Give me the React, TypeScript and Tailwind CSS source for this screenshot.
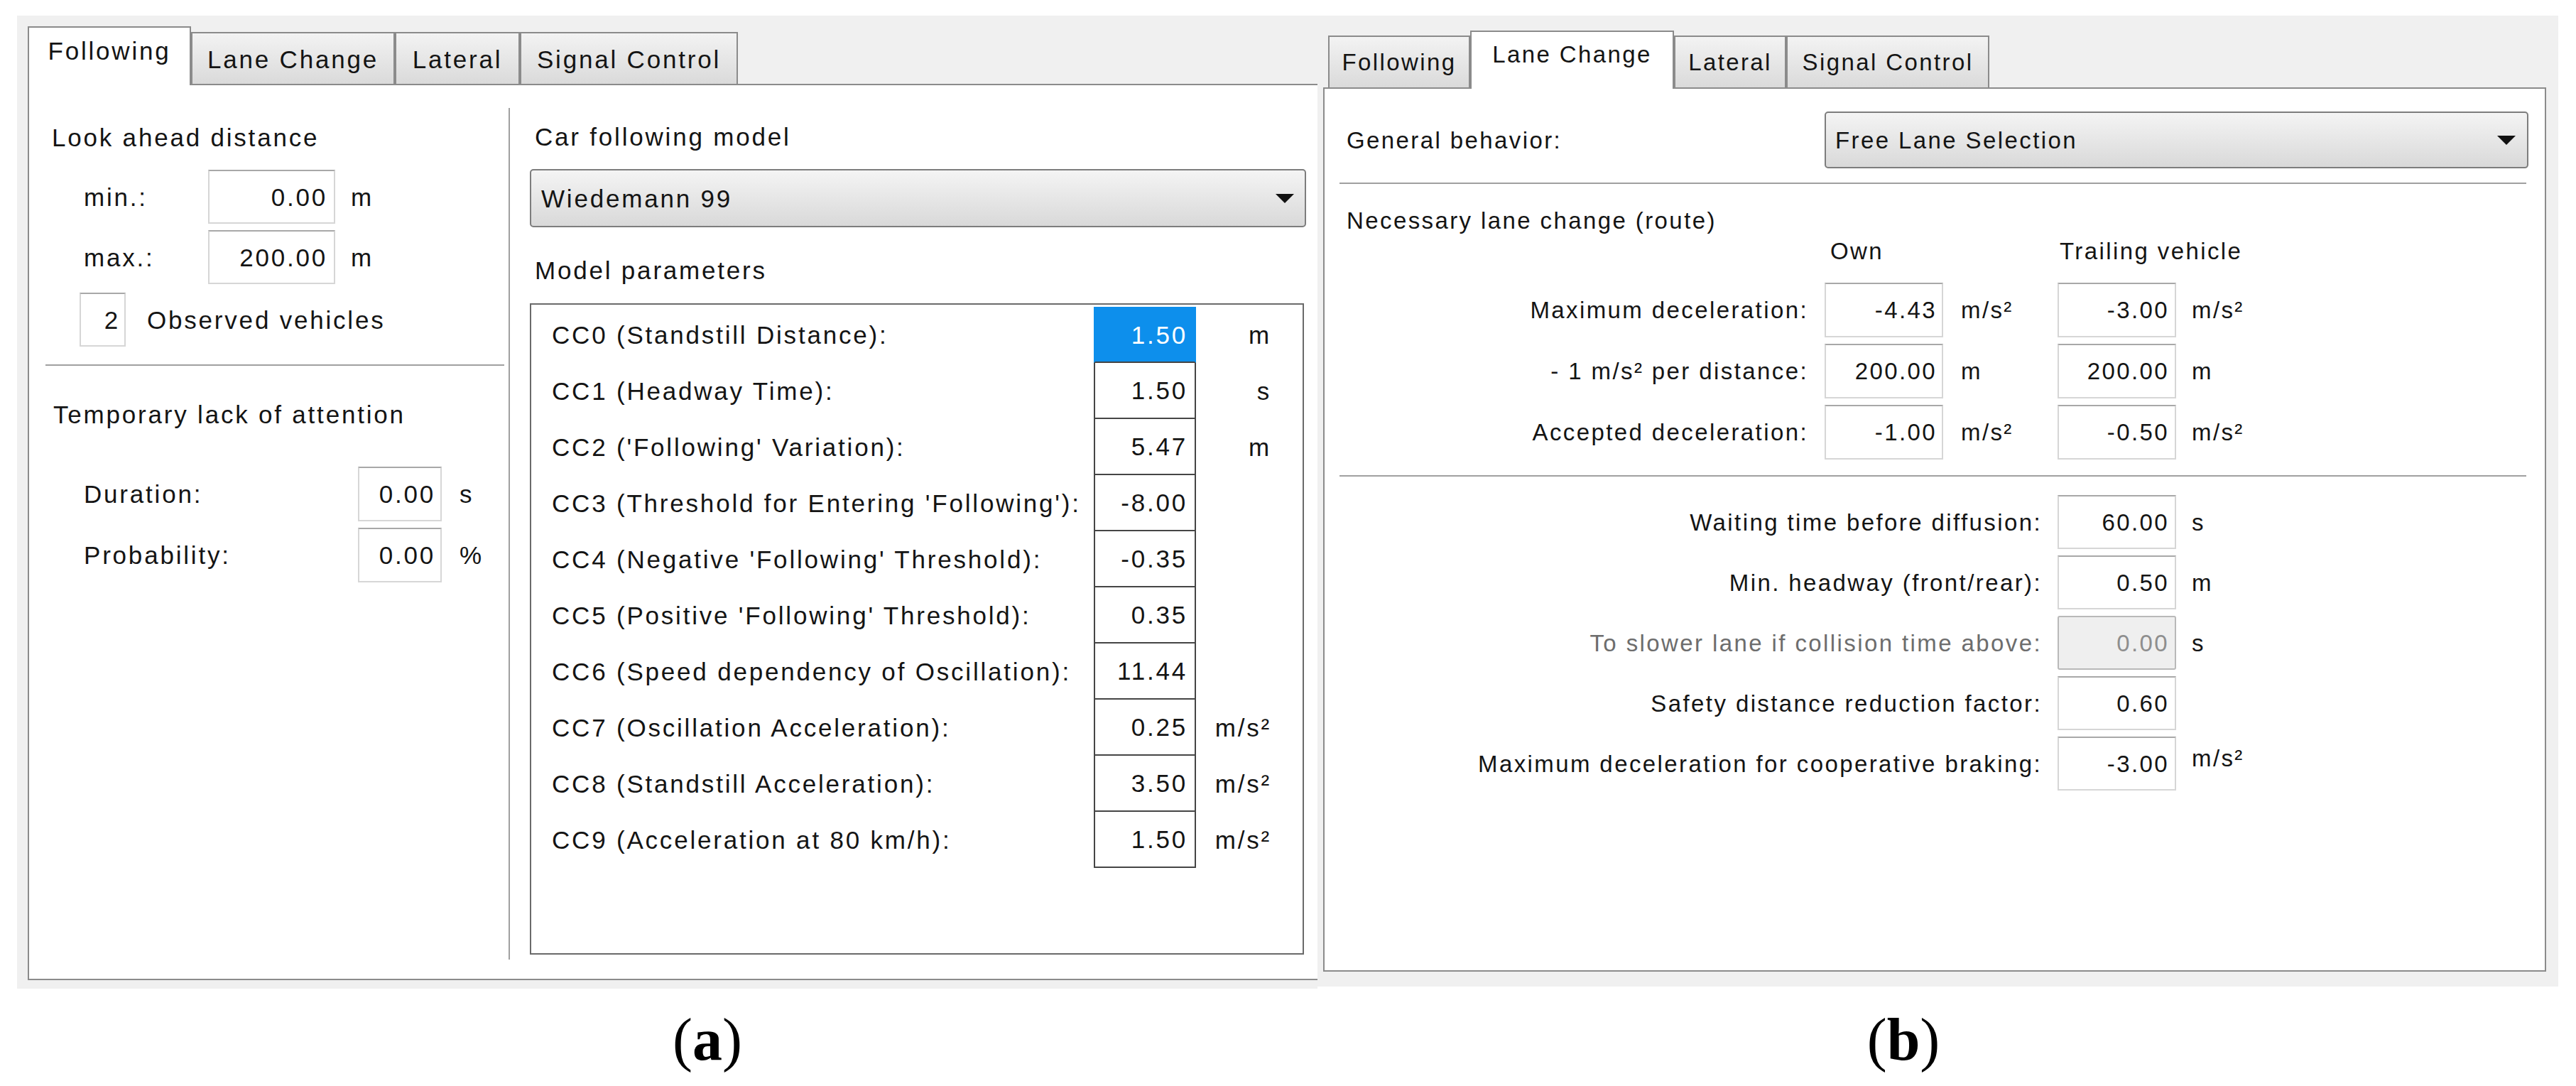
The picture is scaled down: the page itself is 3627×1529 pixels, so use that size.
import React from 'react';

const inputBox =
  'flex items-center justify-end border-2 border-[#d6d6d6] border-t-[#a8a8a8] bg-white';

const Arrow = () => (
  <svg width="26" height="13" viewBox="0 0 26 13">
    <polygon points="0,0 26,0 13,13" fill="#111" />
  </svg>
);

type TabDef = { label: string; w: string; active?: boolean };

const TabStrip = ({ tabs, height, activeH, inactiveH, pad }: { tabs: TabDef[]; height: string; activeH: string; inactiveH: string; pad: string }) => (
  <div className={`flex items-end ${height} ${pad}`}>
    {tabs.map((t) =>
      t.active ? (
        <div
          key={t.label}
          className={`${t.w} ${activeH} relative z-10 -mb-[2px] flex justify-center border-2 border-b-0 border-[#8b8b8b] bg-white pt-[15px]`}
        >
          {t.label}
        </div>
      ) : (
        <div
          key={t.label}
          className={`${t.w} ${inactiveH} flex justify-center border-2 border-b-0 border-[#8b8b8b] bg-gradient-to-b from-[#f3f3f3] to-[#dadada] pt-[19px]`}
        >
          {t.label}
        </div>
      )
    )}
  </div>
);

const params = [
  { label: 'CC0 (Standstill Distance):', value: '1.50', unit: 'm' },
  { label: 'CC1 (Headway Time):', value: '1.50', unit: 's' },
  { label: "CC2 ('Following' Variation):", value: '5.47', unit: 'm' },
  { label: "CC3 (Threshold for Entering 'Following'):", value: '-8.00', unit: '' },
  { label: "CC4 (Negative 'Following' Threshold):", value: '-0.35', unit: '' },
  { label: "CC5 (Positive 'Following' Threshold):", value: '0.35', unit: '' },
  { label: 'CC6 (Speed dependency of Oscillation):', value: '11.44', unit: '' },
  { label: 'CC7 (Oscillation Acceleration):', value: '0.25', unit: 'm/s²' },
  { label: 'CC8 (Standstill Acceleration):', value: '3.50', unit: 'm/s²' },
  { label: 'CC9 (Acceleration at 80 km/h):', value: '1.50', unit: 'm/s²' },
];

const routeRows = [
  { label: 'Maximum deceleration:', own: '-4.43', ownUnit: 'm/s²', trail: '-3.00', trailUnit: 'm/s²' },
  { label: '- 1 m/s² per distance:', own: '200.00', ownUnit: 'm', trail: '200.00', trailUnit: 'm' },
  { label: 'Accepted deceleration:', own: '-1.00', ownUnit: 'm/s²', trail: '-0.50', trailUnit: 'm/s²' },
];

const lowerRows = [
  { label: 'Waiting time before diffusion:', value: '60.00', unit: 's' },
  { label: 'Min. headway (front/rear):', value: '0.50', unit: 'm' },
  { label: 'To slower lane if collision time above:', value: '0.00', unit: 's', disabled: true },
  { label: 'Safety distance reduction factor:', value: '0.60', unit: '' },
  { label: 'Maximum deceleration for cooperative braking:', value: '-3.00', unit: 'm/s²' },
];

const FollowingPanel = () => (
  <div className="flex h-[1370px] w-[1831px] flex-col bg-[#f0f0f0] pb-[12px] pl-[15px] pt-[15px] text-[35px] leading-none tracking-[2.8px]">
    <TabStrip
      pad=""
      height="h-[81px]"
      activeH="h-[83px]"
      inactiveH="h-[73px]"
      tabs={[
        { label: 'Following', w: 'w-[230px]', active: true },
        { label: 'Lane Change', w: 'w-[287px]' },
        { label: 'Lateral', w: 'w-[176px]' },
        { label: 'Signal Control', w: 'w-[307px]' },
      ]}
    />
    {/* the screenshot is cropped on the right, so no right border */}
    <div className="flex flex-1 border-2 border-r-0 border-[#8b8b8b] bg-white">
      <div className="flex w-[675px] flex-col">
        <div className="mt-[53px] flex h-[40px] items-center pl-[32px]">Look ahead distance</div>
        <div className="mt-[26px] flex h-[76px] items-center pl-[77px]">
          <span className="w-[175px]">min.:</span>
          <div className={`${inputBox} h-[76px] w-[179px] pr-[9px]`}>0.00</div>
          <span className="ml-[22px]">m</span>
        </div>
        <div className="mt-[9px] flex h-[76px] items-center pl-[77px]">
          <span className="w-[175px]">max.:</span>
          <div className={`${inputBox} h-[76px] w-[179px] pr-[9px]`}>200.00</div>
          <span className="ml-[22px]">m</span>
        </div>
        <div className="mt-[12px] flex h-[76px] items-center pl-[71px]">
          <div className={`${inputBox} h-[76px] w-[65px] pr-[6px]`}>2</div>
          <span className="ml-[30px]">Observed vehicles</span>
        </div>
        <div className="ml-[23px] mr-[6px] mt-[25px] h-[2px] bg-[#a0a0a0]" />
        <div className="mt-[48px] flex h-[40px] items-center pl-[34px]">Temporary lack of attention</div>
        <div className="mt-[54px] flex h-[77px] items-center pl-[77px]">
          <span className="w-[386px]">Duration:</span>
          <div className={`${inputBox} h-[77px] w-[118px] pr-[7px]`}>0.00</div>
          <span className="ml-[25px]">s</span>
        </div>
        <div className="mt-[9px] flex h-[77px] items-center pl-[77px]">
          <span className="w-[386px]">Probability:</span>
          <div className={`${inputBox} h-[77px] w-[118px] pr-[7px]`}>0.00</div>
          <span className="ml-[25px]">%</span>
        </div>
      </div>

      <div className="mb-[27px] mt-[32px] w-[2px] bg-[#a0a0a0]" />

      <div className="flex flex-1 flex-col pl-[28px] pr-[16px]">
        <div className="mt-[52px] flex h-[40px] items-center pl-[7px]">Car following model</div>
        <div className="mt-[26px] flex h-[82px] items-center justify-between rounded-[5px] border-2 border-[#7d7d7d] bg-gradient-to-b from-[#f4f4f4] to-[#d9d9d9] pl-[14px] pr-[15px]">
          <span>Wiedemann 99</span>
          <Arrow />
        </div>
        <div className="mt-[40px] flex h-[40px] items-center pl-[7px]">Model parameters</div>
        <div className="mr-[3px] mt-[27px] flex h-[917px] flex-col border-2 border-[#6a6a6a] pt-[3px]">
          {params.map((p, i) => (
            <div key={p.label} className="flex h-[79px] items-center">
              <span className="w-[792px] pl-[29px]">{p.label}</span>
              <div
                className={
                  i === 0
                    ? 'flex h-[79px] w-[144px] items-center justify-end border-2 border-[#0d8fec] border-b-[#454545] bg-[#0d8fec] pr-[10px] text-white'
                    : 'flex h-[79px] w-[144px] items-center justify-end border-2 border-t-0 border-[#454545] pr-[10px]'
                }
              >
                {p.value}
              </div>
              <span className="w-[106px] text-right">{p.unit}</span>
            </div>
          ))}
        </div>
      </div>
    </div>
  </div>
);

const LaneChangePanel = () => (
  <div className="flex h-[1367px] w-[1747px] flex-col bg-[#f0f0f0] pb-[21px] pl-[8px] pr-[17px] pt-[21px] text-[33px] leading-none tracking-[2.4px]">
    <TabStrip
      pad="pl-[7px]"
      height="h-[80px]"
      activeH="h-[82px]"
      inactiveH="h-[73px]"
      tabs={[
        { label: 'Following', w: 'w-[200px]' },
        { label: 'Lane Change', w: 'w-[287px]', active: true },
        { label: 'Lateral', w: 'w-[158px]' },
        { label: 'Signal Control', w: 'w-[286px]' },
      ]}
    />
    <div className="flex flex-1 flex-col border-2 border-[#8b8b8b] bg-white">
      <div className="mt-[32px] flex h-[80px] items-center pl-[31px] pr-[23px]">
        <span className="w-[673px]">General behavior:</span>
        <div className="flex h-[80px] flex-1 items-center justify-between rounded-[5px] border-2 border-[#7d7d7d] bg-gradient-to-b from-[#f4f4f4] to-[#d9d9d9] pl-[13px] pr-[16px]">
          <span>Free Lane Selection</span>
          <Arrow />
        </div>
      </div>
      <div className="ml-[21px] mr-[26px] mt-[20px] h-[2px] bg-[#a0a0a0]" />
      <div className="mt-[31px] flex h-[40px] items-center pl-[31px]">Necessary lane change (route)</div>
      <div className="mt-[3px] flex h-[40px] items-center">
        <span className="ml-[712px] w-[323px]">Own</span>
        <span>Trailing vehicle</span>
      </div>
      <div className="mt-[25px] flex flex-col gap-[9px]">
        {routeRows.map((r) => (
          <div key={r.label} className="flex h-[77px] items-center">
            <span className="w-[681px] text-right">{r.label}</span>
            <div className={`${inputBox} ml-[23px] h-[77px] w-[167px] pr-[7px]`}>{r.own}</div>
            <span className="ml-[25px] w-[136px]">{r.ownUnit}</span>
            <div className={`${inputBox} h-[77px] w-[167px] pr-[8px]`}>{r.trail}</div>
            <span className="ml-[22px]">{r.trailUnit}</span>
          </div>
        ))}
      </div>
      <div className="ml-[21px] mr-[26px] mt-[22px] h-[2px] bg-[#a0a0a0]" />
      <div className="mt-[26px] flex flex-col gap-[9px]">
        {lowerRows.map((r) => (
          <div key={r.label} className="flex h-[76px] items-center">
            <span className={`w-[1010px] text-right ${r.disabled ? 'text-[#6d6d6d]' : ''}`}>{r.label}</span>
            <div
              className={
                r.disabled
                  ? 'ml-[22px] flex h-[76px] w-[167px] items-center justify-end rounded-[3px] border-2 border-[#b9b9b9] bg-[#efefef] pr-[8px] text-[#8e8e8e]'
                  : `${inputBox} ml-[22px] h-[76px] w-[167px] pr-[8px]`
              }
            >
              {r.value}
            </div>
            <span className={`ml-[22px] ${r.unit === 'm/s²' ? '-mt-[16px]' : ''}`}>{r.unit}</span>
          </div>
        ))}
      </div>
    </div>
  </div>
);

export default function App() {
  return (
    <div className="h-[1529px] w-[3627px] overflow-hidden bg-white font-['Liberation_Sans',Arial,sans-serif] text-[#141414]">
      <div className="flex items-start pl-[24px] pt-[22px]">
        <FollowingPanel />
        <LaneChangePanel />
      </div>
      <div className="mt-[30px] flex font-['Liberation_Serif','Times_New_Roman',serif] text-[84px] leading-none text-black">
        <div className="w-[1992px] text-center">
          (<span className="font-bold">a</span>)
        </div>
        <div className="w-[1376px] text-center">
          (<span className="font-bold">b</span>)
        </div>
      </div>
    </div>
  );
}
